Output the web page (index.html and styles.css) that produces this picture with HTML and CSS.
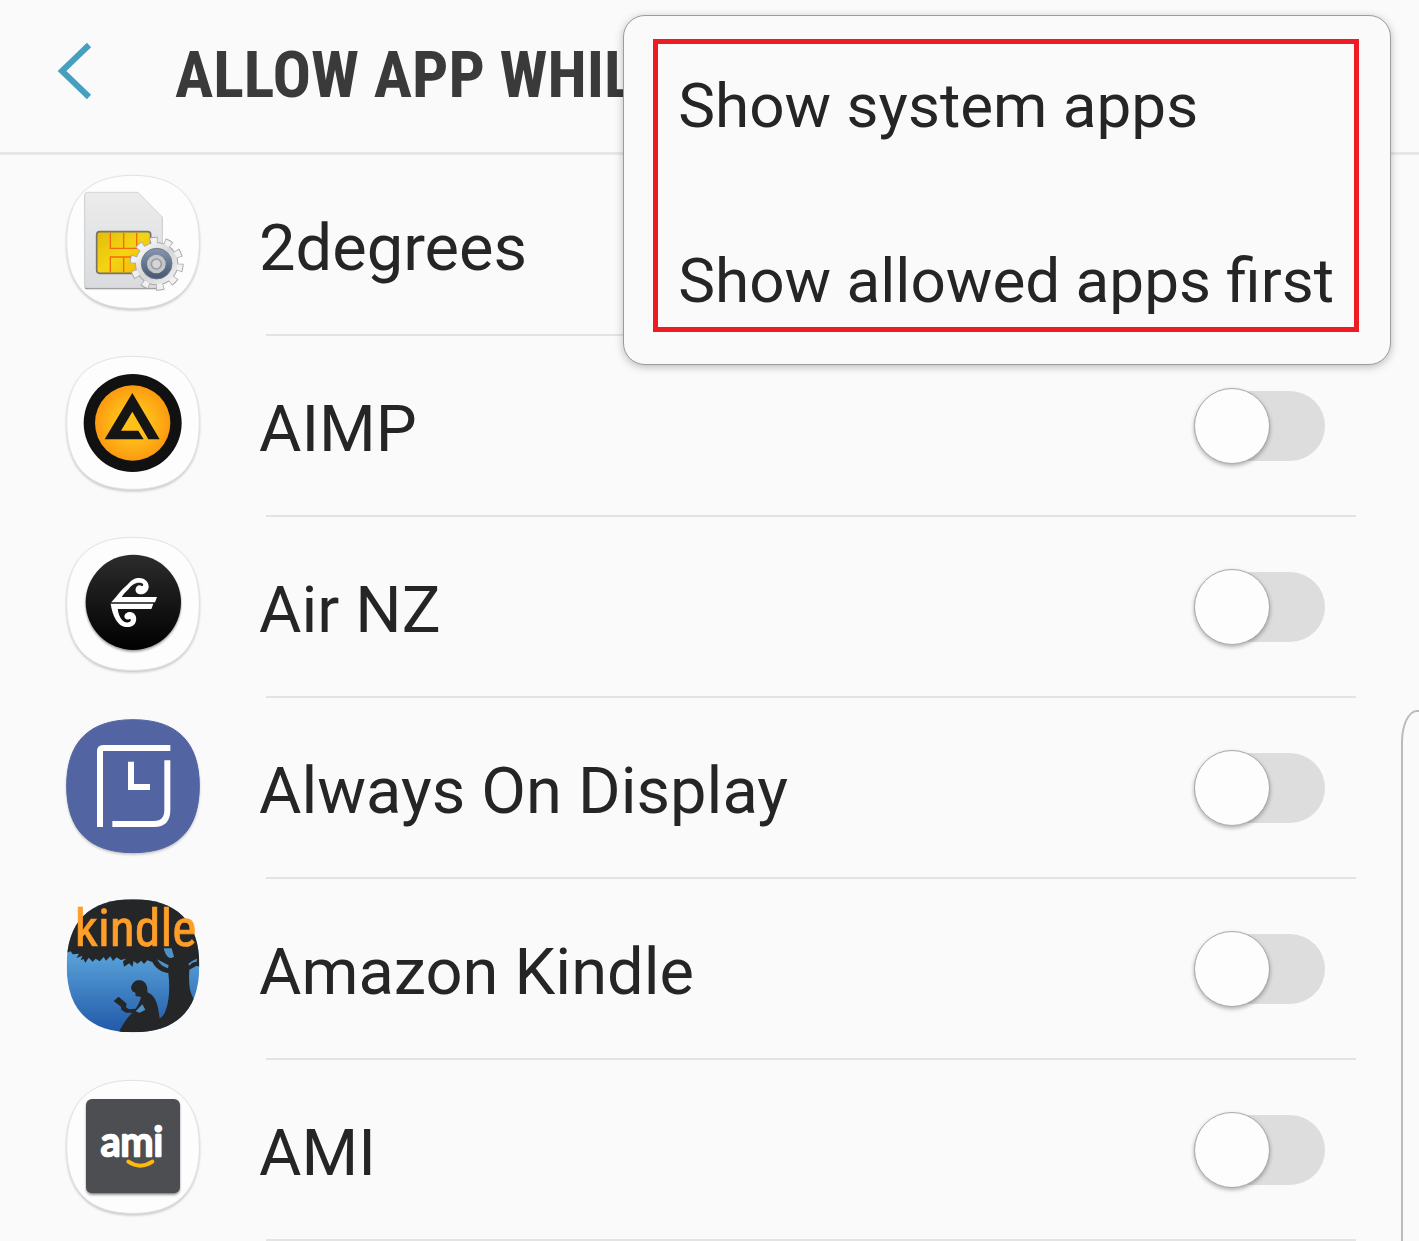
FILE: index.html
```
<!DOCTYPE html>
<html lang="en">
  <head>
    <meta charset="UTF-8" />
    <meta name="viewport" content="width=device-width, initial-scale=1.0" />
    <title>Allow app while</title>
    <link rel="stylesheet" href="styles.css">
  </head>
  <body>
    <!-- shared icon tile -->
    <svg class="defs" aria-hidden="true">
      <defs>
        <path id="tile" d="M249 31C381 31 448 98 448 230C448 362 381 430 249 430C117 430 50 362 50 230C50 98 117 31 249 31Z" />
        <clipPath id="tileClip"><use href="#tile" /></clipPath>
        <linearGradient id="card" x1="0" y1="0" x2="0" y2="1">
          <stop offset="0" stop-color="#ececec" />
          <stop offset="1" stop-color="#d9dbde" />
        </linearGradient>
        <linearGradient id="chip" x1="0" y1="0" x2="1" y2="1">
          <stop offset="0" stop-color="#e3bd08" />
          <stop offset="0.5" stop-color="#f3d414" />
          <stop offset="1" stop-color="#f5b400" />
        </linearGradient>
        <linearGradient id="metal" x1="0" y1="0" x2="1" y2="1">
          <stop offset="0" stop-color="#ffffff" />
          <stop offset="0.5" stop-color="#d5d5d5" />
          <stop offset="1" stop-color="#f4f4f4" />
        </linearGradient>
        <linearGradient id="steel" x1="0" y1="0" x2="0" y2="1">
          <stop offset="0" stop-color="#8796ae" />
          <stop offset="1" stop-color="#46566f" />
        </linearGradient>
        <radialGradient id="amber">
          <stop offset="0.4" stop-color="#ffc01a" />
          <stop offset="1" stop-color="#fc9a10" />
        </radialGradient>
        <linearGradient id="night" x1="0" y1="0" x2="0" y2="1">
          <stop offset="0" stop-color="#2c2c2c" />
          <stop offset="1" stop-color="#000000" />
        </linearGradient>
        <linearGradient id="sky" x1="0" y1="0" x2="0" y2="1">
          <stop offset="0.45" stop-color="#559dd6" />
          <stop offset="1" stop-color="#2058a8" />
        </linearGradient>
      </defs>
    </svg>

    <header class="header">
      <button type="button" class="back-btn" aria-label="Back">
        <svg viewBox="0 0 36 60"><path d="M33 3L6 29L33 55" /></svg>
      </button>
      <h1>ALLOW APP WHILE</h1>
    </header>

    <ul class="app-list">
      <li>
        <label class="app-row" for="app-2degrees">
          <svg class="app-icon" viewBox="0 0 510 465" aria-hidden="true">
            <use href="#tile" class="tile" />
            <path d="M112 86H264L337 158V366Q337 373 330 373H112Q104 373 104 366V94Q104 86 112 86Z" fill="#8c8c8c" />
            <path d="M112 82H264L337 156V362Q337 369 330 369H112Q104 369 104 362V90Q104 82 112 82Z" fill="url(#card)" stroke="#c9c9c9" stroke-width="2" />
            <rect x="140" y="200" width="162" height="125" rx="9" fill="url(#chip)" stroke="#77736a" stroke-width="5" />
            <path d="M181 204V250H260V204M221 204V250M181 322V276H260M221 276V322" fill="none" stroke="#f56a0c" stroke-width="4" />
            <circle cx="320" cy="296" r="68" fill="none" stroke="#a9a9a9" stroke-width="26" stroke-dasharray="22 20.7" />
            <circle cx="320" cy="296" r="65" fill="#a9a9a9" />
            <circle cx="320" cy="296" r="68" fill="none" stroke="#f1f1f1" stroke-width="20" stroke-dasharray="18 24.7" stroke-dashoffset="-2" />
            <circle cx="320" cy="296" r="62" fill="url(#metal)" />
            <circle cx="320" cy="296" r="46" fill="url(#steel)" stroke="#6f7b8e" stroke-width="3" />
            <circle cx="319" cy="297" r="28" fill="#c4c6c8" />
            <circle cx="319" cy="297" r="15" fill="#d6d6d6" stroke="#989ca3" stroke-width="5" />
          </svg>
          <span class="app-name">2degrees</span>
          <input type="checkbox" id="app-2degrees" class="toggle" />
        </label>
      </li>
      <li>
        <label class="app-row" for="app-aimp">
          <svg class="app-icon" viewBox="0 0 510 465" aria-hidden="true">
            <use href="#tile" class="tile" />
            <circle cx="248" cy="231" r="147" fill="#111111" />
            <circle cx="248" cy="231" r="113" fill="url(#amber)" />
            <path d="M247 141L329 280H295L247 197L213 254H265L281 280H164Z" fill="#151515" />
          </svg>
          <span class="app-name">AIMP</span>
          <input type="checkbox" id="app-aimp" class="toggle" />
        </label>
      </li>
      <li>
        <label class="app-row" for="app-airnz">
          <svg class="app-icon" viewBox="0 0 510 465" aria-hidden="true">
            <use href="#tile" class="tile" />
            <g transform="translate(0 9)">
              <circle cx="250" cy="217" r="143" fill="url(#night)" class="raised" />
              <path d="M321 201L315 217H184L199 201ZM182 221H310L304 237H190Z" fill="#ffffff" />
              <path d="M184 217C204 194 214 179 232 164C246 149 254 144 268 144C286 144 297 158 296 172C294 185 285 193 273 193C262 193 255 186 257 176C259 166 269 162 276 169C283 165 280 158 268 158C254 158 244 166 236 177C226 187 220 193 214 203Z" fill="#ffffff" />
              <path d="M182 221C186 247 194 270 210 284C223 294 243 293 252 284C262 274 261 256 249 248C238 242 224 248 223 259C223 267 231 271 239 267C244 266 244 274 236 277C216 280 204 256 203 233Z" fill="#ffffff" />
            </g>
          </svg>
          <span class="app-name">Air NZ</span>
          <input type="checkbox" id="app-airnz" class="toggle" />
        </label>
      </li>
      <li>
        <label class="app-row" for="app-aod">
          <svg class="app-icon" viewBox="0 0 510 465" aria-hidden="true">
            <g transform="translate(0 4)">
              <use href="#tile" class="tile tile-blue" />
              <path d="M150 353V126Q150 116 160 116H361M352 153V302Q352 344 312 344H187M243 157V233H300" fill="none" stroke="#ffffff" stroke-width="18" />
            </g>
          </svg>
          <span class="app-name">Always On Display</span>
          <input type="checkbox" id="app-aod" class="toggle" />
        </label>
      </li>
      <li>
        <label class="app-row" for="app-kindle">
          <svg class="app-icon" viewBox="0 0 510 465" aria-hidden="true">
            <g clip-path="url(#tileClip)">
              <rect x="45" y="28" width="410" height="405" fill="url(#sky)" />
              <g fill="#242628">
                <path d="M40 20H460V236L440 230L418 242C415 290 420 315 436 336L450 345V440H205L213 425C229 412 236 401 241 391C275 400 320 405 341 377C357 351 361 300 355 252C338 250 318 241 307 219L292 214L282 225L274 215L262 224L251 216L247 234L238 223L222 233L219 217L229 209L212 213L200 205L189 216L181 202L168 215L161 204L149 217L137 209L128 218L116 206L106 221L100 210L92 214L97 200L80 207L87 194L68 196L62 187L40 195Z" />
                <path d="M243 297C246 280 258 272 270 274C286 276 294 289 292 310C315 318 326 344 330 402L205 433C216 410 229 388 247 371H228L214 362L213 353L191 336L206 323L230 344L228 355L237 361L257 359C265 348 271 335 273 324L257 321L256 311L247 307Z" />
              </g>
              <path d="M341 178C347 202 357 213 372 203L365 178ZM321 211L356 229L354 238C340 234 329 226 321 211ZM415 225Q424 214 442 209L439 219Q427 217 419 230ZM277 346L286 362L269 371L257 367Z" fill="#4d91c8" />
            </g>
            <text x="74" y="172" class="kindle-text">kindle</text>
          </svg>
          <span class="app-name">Amazon Kindle</span>
          <input type="checkbox" id="app-kindle" class="toggle" />
        </label>
      </li>
      <li>
        <label class="app-row" for="app-ami">
          <svg class="app-icon" viewBox="0 0 510 465" aria-hidden="true">
            <use href="#tile" class="tile" />
            <rect x="108" y="87" width="282" height="283" rx="18" fill="#4d4e52" class="raised" />
            <text x="152" y="257" class="ami-text">ami</text>
            <path d="M235 275Q271 299 307 275" fill="none" stroke="#ffb90b" stroke-width="12" stroke-linecap="round" />
          </svg>
          <span class="app-name">AMI</span>
          <input type="checkbox" id="app-ami" class="toggle" />
        </label>
      </li>
    </ul>

    <div class="menu">
      <div class="menu-items">
        <button type="button">Show system apps</button>
        <button type="button">Show allowed apps first</button>
      </div>
    </div>

    <div class="edge-handle"></div>
  </body>
</html>
```
FILE: styles.css
```
* {
  margin: 0;
  padding: 0;
  box-sizing: border-box;
}
body {
  position: relative;
  min-height: 100vh;
  background: #fafafa;
  color: #252525;
  font-family: Roboto, "Liberation Sans", sans-serif;
  overflow-x: hidden;
}
button {
  border: none;
  background: none;
  color: inherit;
  font: inherit;
  cursor: pointer;
}
.defs {
  position: absolute;
  width: 0;
  height: 0;
}
.header {
  display: flex;
  align-items: center;
  height: 155px;
  padding: 0 56px 8px;
  border-bottom: 3px solid #e7e7e7;
}
.back-btn {
  width: 36px;
  height: 60px;
  margin-right: 83px;
}
.back-btn svg {
  display: block;
  fill: none;
  stroke: #479fc0;
  stroke-width: 6;
}
.header h1 {
  padding-top: 8px;
  color: #3a3a3a;
  font-family: "Roboto Condensed", "Liberation Sans Narrow", Roboto, sans-serif;
  font-size: 64px;
  font-weight: 700;
  line-height: 76px;
  white-space: nowrap;
}
.app-list {
  list-style: none;
}
.app-list li::after {
  content: "";
  display: block;
  height: 2px;
  margin: 0 63px 0 266px;
  background: #e3e3e3;
}
.app-row {
  display: flex;
  align-items: center;
  height: 179px;
  padding: 0 94px 0 50px;
}
.app-icon {
  flex: none;
  width: 170px;
  height: 155px;
  margin-right: 39px;
  margin-bottom: 4px;
}
.tile {
  fill: #fdfdfd;
  stroke: #e2e2e2;
  stroke-width: 3;
  filter: drop-shadow(0 5px 3px rgba(0, 0, 0, 0.2));
}
.tile-blue {
  fill: #5264a2;
  stroke: #5264a2;
}
.raised {
  filter: drop-shadow(0 5px 3px rgba(0, 0, 0, 0.4));
}
.kindle-text {
  fill: #ff9e28;
  stroke: #ff9e28;
  stroke-width: 2;
  font-family: "Roboto Condensed", "Liberation Sans Narrow", sans-serif;
  font-size: 155px;
  font-weight: 400;
}
.ami-text {
  fill: #ffffff;
  stroke: #ffffff;
  stroke-width: 8;
  stroke-linejoin: round;
  font-family: Lato, sans-serif;
  font-size: 120px;
  font-weight: 400;
}
.app-name {
  flex: 1;
  padding-top: 6px;
  font-size: 65px;
  line-height: 76px;
}
.toggle {
  display: flex;
  align-items: center;
  appearance: none;
  width: 131px;
  height: 70px;
  border-radius: 35px;
  background: #dddddd;
  cursor: pointer;
}
.toggle::before {
  content: "";
  flex: none;
  box-sizing: border-box;
  width: 76px;
  height: 76px;
  border: 1px solid #aaaaaa;
  border-radius: 50%;
  background: #fdfdfd;
  box-shadow: 0 2px 4px rgba(0, 0, 0, 0.3);
}
.toggle:checked {
  justify-content: flex-end;
  background: #479fc0;
}
.menu {
  position: absolute;
  top: 15px;
  right: 28px;
  padding: 23px 31px 32px 29px;
  border: 1px solid #9c9c9c;
  border-radius: 22px;
  background: #fafafa;
  box-shadow: 0 2px 8px rgba(0, 0, 0, 0.25);
}
.menu-items {
  display: flex;
  flex-direction: column;
  gap: 103px;
  padding: 26px 20px 10px;
  border: 5px solid #ed1c24;
}
.menu-items button {
  font-size: 62px;
  line-height: 72px;
  text-align: left;
  white-space: nowrap;
}
.edge-handle {
  position: absolute;
  top: 710px;
  right: 0;
  bottom: 0;
  width: 18px;
  border-top: 2px solid #bbbbbb;
  border-left: 2px solid #bbbbbb;
  border-top-left-radius: 16px 32px;
}
```
